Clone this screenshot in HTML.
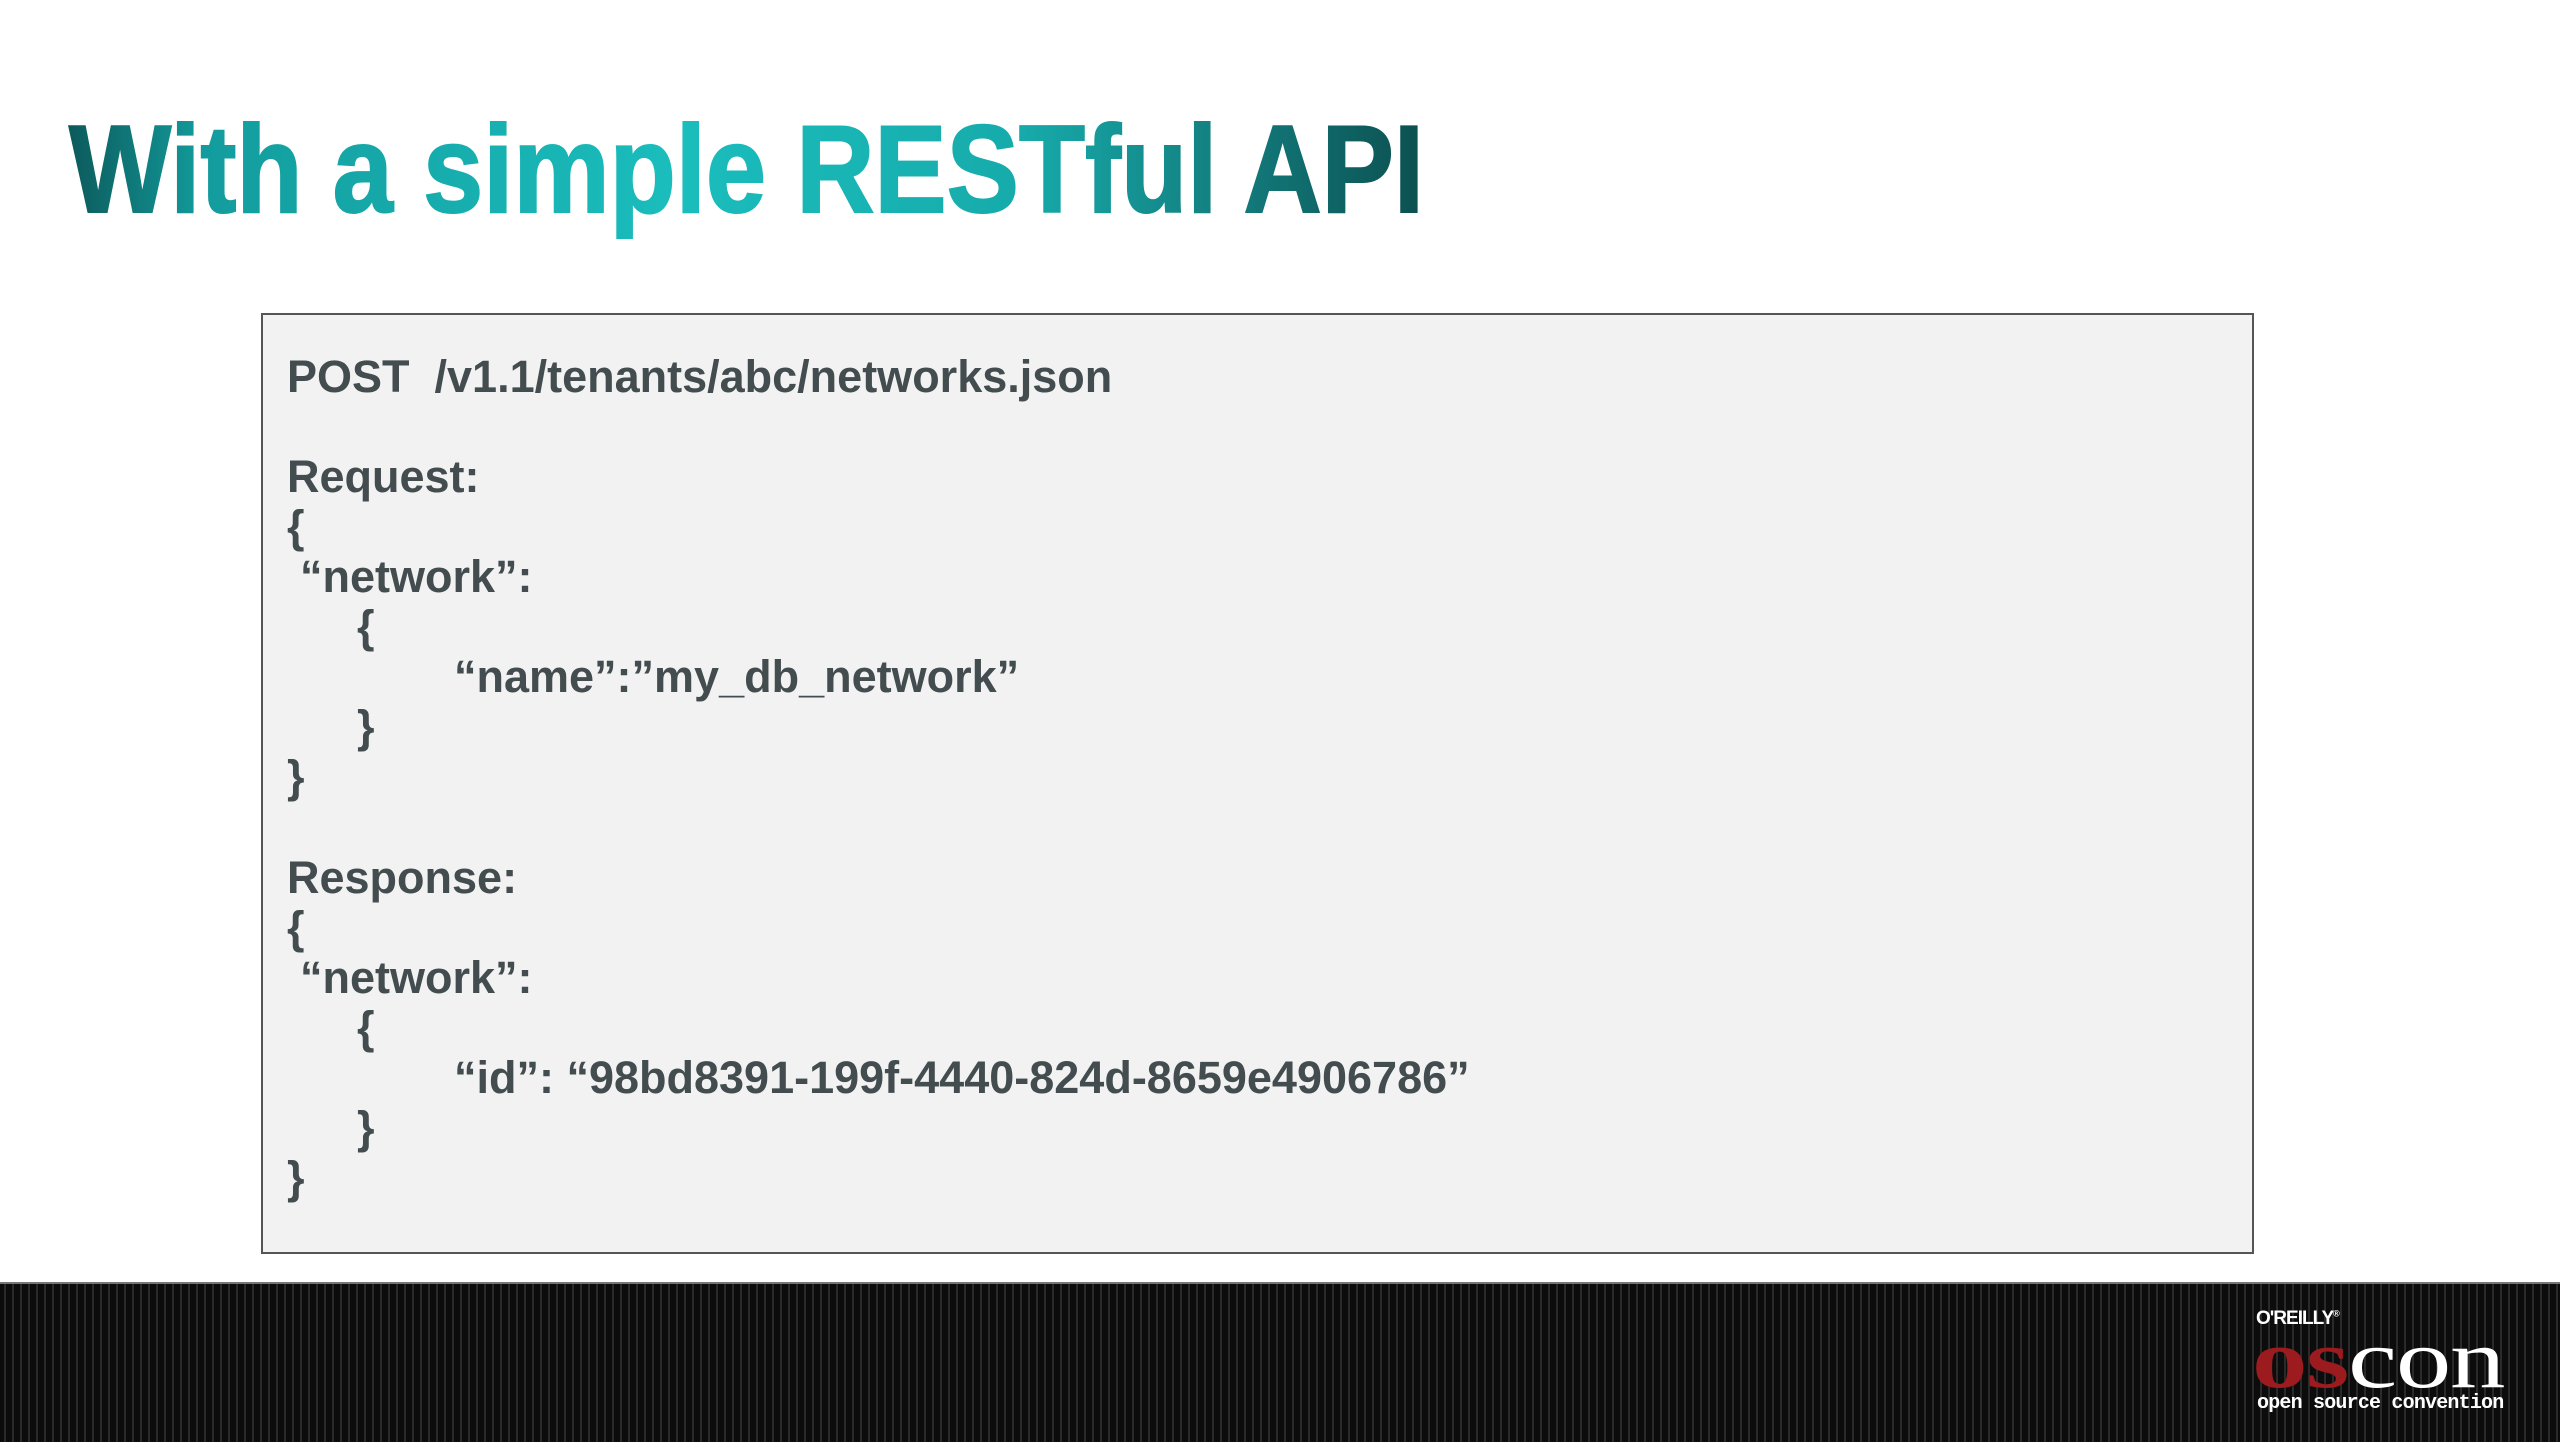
<!DOCTYPE html>
<html><head><meta charset="utf-8"><style>
html,body{margin:0;padding:0;}
body{width:2560px;height:1440px;position:relative;background:#fff;overflow:hidden;font-family:"Liberation Sans",Arial,sans-serif;}
.box{position:absolute;left:261px;top:313px;width:1989px;height:937px;background:#f2f2f2;border:2px solid #555;}
.l{position:absolute;font-weight:bold;font-size:45px;color:#434c4e;white-space:pre;line-height:50px;}
.footer{position:absolute;left:0;top:1282px;width:2560px;height:158px;background:repeating-linear-gradient(90deg,#0c0c0c 0 4px,#2a2a2a 4px 6px,#0c0c0c 6px 8px);border-top:2px solid #777;}
</style></head><body>
<svg style="position:absolute;left:0;top:0" width="2560" height="260">
<defs><linearGradient id="g" x1="0" y1="0" x2="1" y2="0">
<stop offset="0" stop-color="#0c5a5b"/><stop offset="0.1" stop-color="#139c9d"/><stop offset="0.45" stop-color="#1bbdbd"/><stop offset="0.7" stop-color="#17abab"/><stop offset="0.85" stop-color="#137f80"/><stop offset="1" stop-color="#0c4f50"/></linearGradient></defs>
<text x="69" y="212" font-family="Liberation Sans, Arial, sans-serif" font-weight="bold" font-size="124" textLength="1355" lengthAdjust="spacingAndGlyphs" fill="url(#g)" stroke="url(#g)" stroke-width="2">With a simple RESTful API</text>
</svg>
<div class="box"></div>
<div class="l" style="left:287px;top:352px">POST  /v1.1/tenants/abc/networks.json</div>
<div class="l" style="left:287px;top:452px">Request:</div>
<div class="l" style="left:287px;top:502px">{</div>
<div class="l" style="left:300px;top:552px">“network”:</div>
<div class="l" style="left:357px;top:602px">{</div>
<div class="l" style="left:454px;top:652px">“name”:”my_db_network”</div>
<div class="l" style="left:357px;top:702px">}</div>
<div class="l" style="left:287px;top:752px">}</div>
<div class="l" style="left:287px;top:853px">Response:</div>
<div class="l" style="left:287px;top:903px">{</div>
<div class="l" style="left:300px;top:953px">“network”:</div>
<div class="l" style="left:357px;top:1003px">{</div>
<div class="l" style="left:454px;top:1053px">“id”: “98bd8391-199f-4440-824d-8659e4906786”</div>
<div class="l" style="left:357px;top:1103px">}</div>
<div class="l" style="left:287px;top:1153px">}</div>
<div class="footer"></div>
<div style="position:absolute;left:2256px;top:1308px;color:#fff;font-size:19px;font-weight:bold;letter-spacing:-1px;">O'REILLY<sup style="font-size:9px">®</sup></div>
<div style="position:absolute;left:2252px;top:1318px;font-family:'Liberation Serif',serif;font-size:84px;line-height:84px;white-space:nowrap;letter-spacing:-1px;transform:scaleX(1.32);transform-origin:0 0;"><span style="color:#9b1b1e;font-weight:bold">os</span><span style="color:#fff">con</span></div>
<div style="position:absolute;left:2257px;top:1392px;color:#fff;font-family:'Liberation Mono',monospace;font-weight:bold;font-size:20px;letter-spacing:-0.8px;white-space:nowrap;">open source convention</div>
</body></html>
